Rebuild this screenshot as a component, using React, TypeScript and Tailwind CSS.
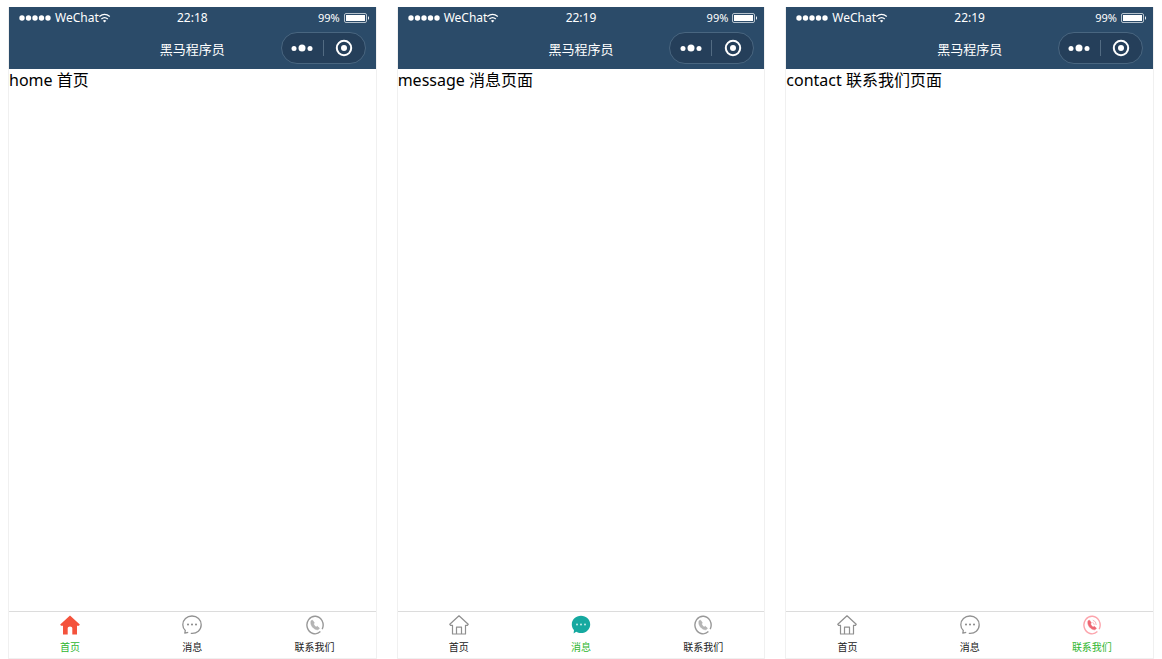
import clsx from 'clsx'

type TabKey = 'home' | 'message' | 'contact'

const tabs: { key: TabKey; label: string }[] = [
  { key: 'home', label: '首页' },
  { key: 'message', label: '消息' },
  { key: 'contact', label: '联系我们' },
]

const screens: { active: TabKey; time: string; text: string }[] = [
  { active: 'home', time: '22:18', text: 'home 首页' },
  { active: 'message', time: '22:19', text: 'message 消息页面' },
  { active: 'contact', time: '22:19', text: 'contact 联系我们页面' },
]

function HomeIcon({ active }: { active: boolean }) {
  if (active) {
    return (
      <svg className="w-5 h-5" viewBox="0 0 20 20" fill="#f4533c">
        <path d="M10 0.5 L19.8 9.6 L19 10.8 H17 V19.5 H12.3 V13 Q12.3 11.5 10 11.5 Q7.7 11.5 7.7 13 V19.5 H3 V10.8 H1 L0.2 9.6 Z" />
      </svg>
    )
  }
  return (
    <svg className="w-5 h-5" viewBox="0 0 20 20" fill="none" stroke="#8f8f8f" strokeWidth="1.2" strokeLinejoin="round">
      <path d="M10 0.8 L0.8 9.3 L1.6 10.3 H3.5 V19 H16.5 V10.3 H18.4 L19.2 9.3 Z" />
      <path d="M7.5 19 V12.2 H12.5 V19" />
    </svg>
  )
}

function MessageIcon({ active }: { active: boolean }) {
  return (
    <svg className="w-5 h-5" viewBox="0 0 20 20">
      {active ? (
        <path d="M10 0.8 C15.2 0.8 19.2 4.6 19.2 9.4 C19.2 14.2 15.2 18 10 18 C8.2 18 6.6 17.6 5.2 16.7 L2.6 18.6 L3 15 C1.6 13.5 0.8 11.6 0.8 9.4 C0.8 4.6 4.8 0.8 10 0.8 Z" fill="#16a9a0" />
      ) : (
        <path d="M8.8 18.3 C15 19 19.2 14.8 19.2 9.7 C19.2 4.8 15.2 1 10 1 C4.8 1 0.8 4.8 0.8 9.7 C0.8 12 1.8 14 3.3 15.5 L2.8 18.2 L6.2 17.4" fill="none" stroke="#929292" strokeWidth="1.3" strokeLinejoin="round" />
      )}
      <g fill={active ? '#c5eeea' : '#858585'}>
        <circle cx="6" cy="9.6" r="1" />
        <circle cx="10" cy="9.6" r="1" />
        <circle cx="14" cy="9.6" r="1" />
      </g>
    </svg>
  )
}

function ContactIcon({ active }: { active: boolean }) {
  return (
    <svg className="w-5 h-5" viewBox="0 0 20 20" fill="none">
      <path d="M15.4 16.6 A8.1 8.8 0 1 1 17.2 14.1" stroke={active ? '#fca5ad' : '#999999'} strokeWidth="1.4" />
      <path
        d="M6 5.8 L7.6 5.2 L9.3 7.8 L8.6 9 C9.2 10.5 10 11.4 11.2 12 L12.3 11.3 L14.5 13.3 L12.9 14.8 C8.8 14.8 4.8 10.4 6 5.8 Z"
        fill={active ? '#ee6672' : '#b5b5b5'}
        stroke={active ? '#ee6672' : '#a6a6a6'}
        strokeWidth="0.5"
      />
      {active && <path d="M10.8 5.2 Q14.4 6.2 14.2 10 M10.5 7.5 Q12.3 8 12.2 9.8" stroke="#fbb0b7" />}
    </svg>
  )
}

function TabIcon({ name, active }: { name: TabKey; active: boolean }) {
  if (name === 'home') return <HomeIcon active={active} />
  if (name === 'message') return <MessageIcon active={active} />
  return <ContactIcon active={active} />
}

function StatusBar({ time }: { time: string }) {
  return (
    <div className="grid grid-cols-3 items-center h-[22px] px-1.5 text-xs">
      <div className="flex items-center">
        <svg className="w-9 h-2 mr-1" viewBox="0 0 36 8" fill="currentColor">
          <circle cx="7" cy="4" r="2.7" />
          <circle cx="13.5" cy="4" r="2.7" />
          <circle cx="20" cy="4" r="2.7" />
          <circle cx="26.5" cy="4" r="2.7" />
          <circle cx="33" cy="4" r="2.7" />
        </svg>
        <span>WeChat</span>
        <svg className="w-3 h-3" viewBox="0 0 12 12" fill="none" stroke="currentColor" strokeWidth="1.3">
          <path d="M0.4 4.6 Q5.6 0.2 10.8 4.6 M2.4 7 Q5.6 4.2 8.8 7" />
          <path d="M3.9 8.8 Q5.6 7.3 7.3 8.8 L5.6 10.6 Z" fill="currentColor" stroke="none" />
        </svg>
      </div>
      <span className="text-center">{time}</span>
      <div className="flex items-center justify-end gap-1">
        <span className="text-[11px]">99%</span>
        <svg className="w-[26px] h-3" viewBox="0 0 26 12">
          <rect x="0.5" y="1.5" width="22" height="9" rx="1.5" fill="none" stroke="#b6c3ce" />
          <rect x="2" y="3" width="19" height="6" fill="#ffffff" />
          <path d="M24 4 Q26 6 24 8 Z" fill="#ffffff" />
        </svg>
      </div>
    </div>
  )
}

function TitleBar() {
  return (
    <div className="grid grid-cols-3 items-center h-10 px-2.5 pt-0.5">
      <h1 className="col-start-2 text-center text-[13px]">黑马程序员</h1>
      <div className="justify-self-end flex items-center w-[85px] h-8 mb-1 rounded-full border border-[#496680] bg-[#253f5a]">
        <button type="button" aria-label="更多" className="flex-1 flex justify-center">
          <svg className="w-[22px] h-2" viewBox="0 0 22 8" fill="#ffffff">
            <circle cx="3" cy="4.5" r="2.5" />
            <circle cx="11" cy="4" r="3.5" />
            <circle cx="19" cy="4.5" r="2.5" />
          </svg>
        </button>
        <span className="w-px h-4 bg-[#526b82]" />
        <button type="button" aria-label="关闭" className="flex-1 flex justify-center">
          <svg className="w-[18px] h-[18px]" viewBox="0 0 18 18">
            <circle cx="9" cy="9" r="7.2" fill="none" stroke="#ffffff" strokeWidth="2" />
            <circle cx="9" cy="9" r="3" fill="#ffffff" />
          </svg>
        </button>
      </div>
    </div>
  )
}

function Phone({ active, time, text }: { active: TabKey; time: string; text: string }) {
  return (
    <section className="flex flex-col min-w-0 border border-t-0 border-[#f0f0f0]">
      <header className="bg-[#2b4b69] text-white">
        <StatusBar time={time} />
        <TitleBar />
      </header>
      <main className="flex-1 text-base leading-[22px] text-black">{text}</main>
      <nav className="grid grid-cols-3 h-[47px] border-t border-[#dcdcdc]">
        {tabs.map(tab => (
          <button
            key={tab.key}
            type="button"
            className={clsx(
              'flex flex-col items-center pt-[3px] gap-1 text-[10px] leading-4',
              tab.key === active ? 'text-[#2fb62f]' : 'text-[#222222]'
            )}
          >
            <TabIcon name={tab.key} active={tab.key === active} />
            <span>{tab.label}</span>
          </button>
        ))}
      </nav>
    </section>
  )
}

export default function App() {
  return (
    <div className="grid grid-cols-3 gap-5 min-h-screen px-2 pt-[7px] bg-white font-['Noto_Sans','Noto_Sans_CJK_SC',sans-serif]">
      {screens.map(screen => (
        <Phone key={screen.active} {...screen} />
      ))}
    </div>
  )
}
